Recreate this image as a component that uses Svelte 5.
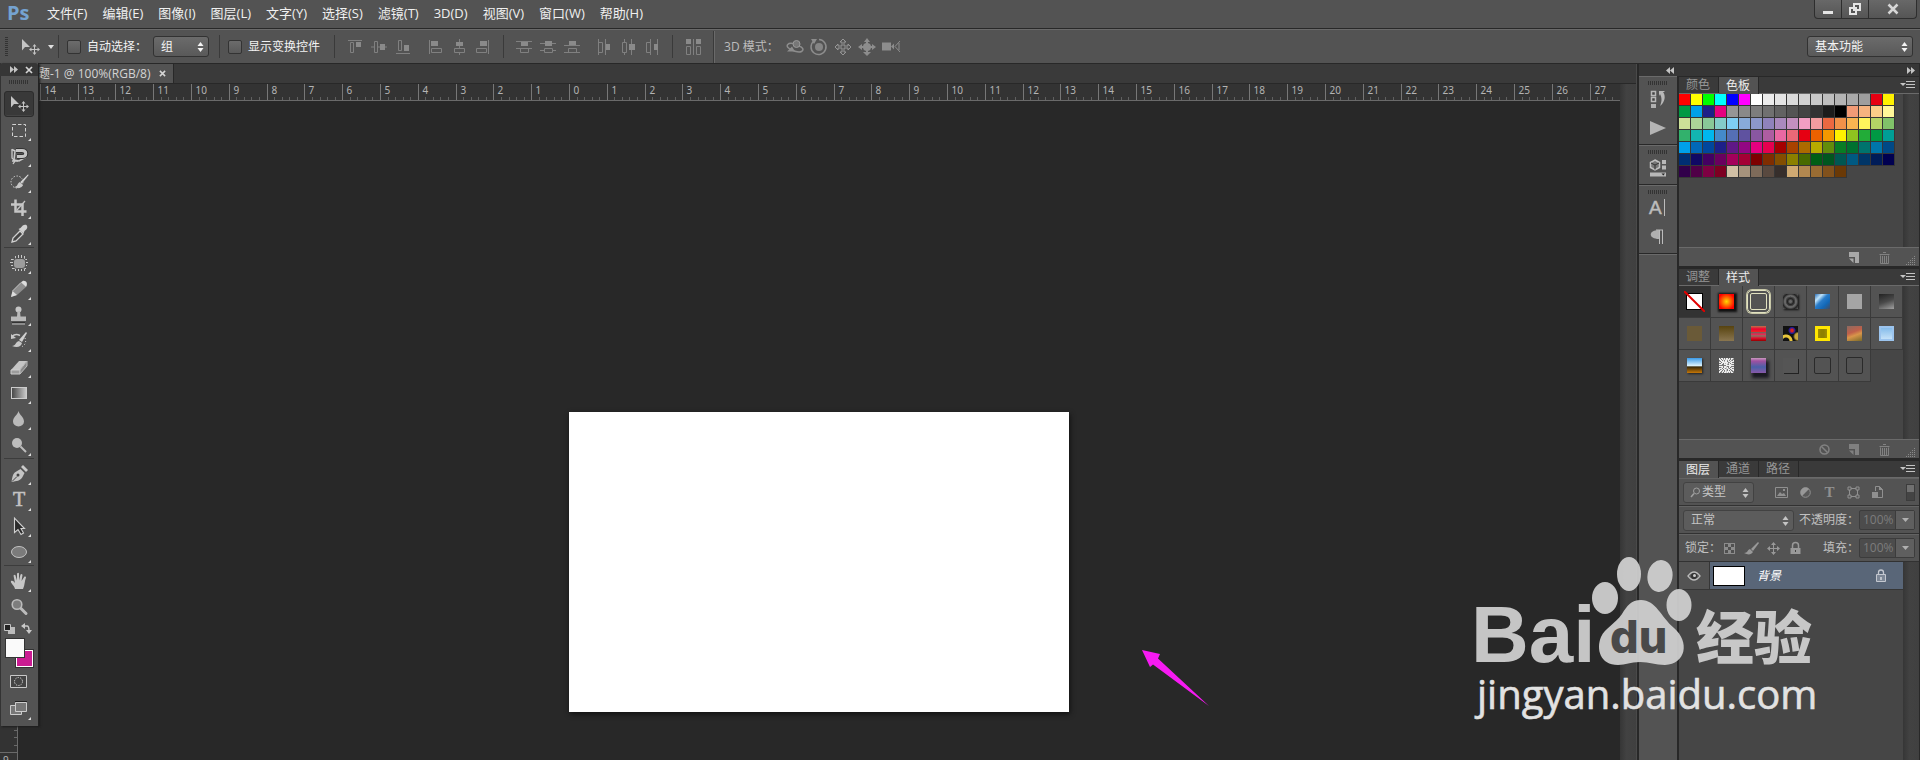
<script>
  const menus = ['文件(F)', '编辑(E)', '图像(I)', '图层(L)', '文字(Y)', '选择(S)', '滤镜(T)', '3D(D)', '视图(V)', '窗口(W)', '帮助(H)'];

  const cm = 37.8;
  const originX = 569;
  const originY = 311;
  const hTicks = [];
  for (let i = -14 * 5; i <= 27 * 5 + 3; i++) hTicks.push({ x: Math.round(originX + (i * cm) / 5) + 0.5, major: i % 5 === 0, label: Math.abs(i / 5) });
  const vTicks = [];
  for (let i = 8 * 5 + 1; i <= 9 * 5 + 1; i++) vTicks.push({ y: Math.round(originY + (i * cm) / 5) + 0.5, major: i % 5 === 0, label: Math.abs(i / 5) });

  const moveIcon =
    '<path d="M4 4v11.500l3-3.500h5z" fill="#c4c4c4"/><path d="M16.500 10v9M12 14.500h9" stroke="#c4c4c4"/><path d="M16.500 9l2 2.500h-4zM16.500 20l2-2.500h-4zM11 14.500l2.500-2v4zM22 14.500l-2.500-2v4z" fill="#c4c4c4"/>';

  const tools = [
    [
      { name: '移动工具', active: true, art: moveIcon },
      { name: '矩形选框工具', more: true, art: '<rect x="5.500" y="6.500" width="13" height="12" fill="none" stroke="#d2d2d2" stroke-dasharray="3.500 2"/>' },
      { name: '套索工具', more: true, art: '<path d="M5 5.500l3 1.500-1 9 5 1 7-4" fill="none" stroke="#c8c8c8" stroke-width="1.500"/><path d="M9 6.500h6c5 0 5 6 0 6h-5" fill="none" stroke="#333" stroke-width="5"/><path d="M9 6.500h6c5 0 5 6 0 6h-5" fill="none" stroke="#c4c4c4" stroke-width="3"/><path d="M5 5v9l3 3-2 3M5 17h6" fill="none" stroke="#c8c8c8" stroke-width="1.300"/>' },
      { name: '快速选择工具', more: true, art: '<circle cx="10" cy="12" r="6" fill="none" stroke="#d2d2d2" stroke-dasharray="1.500 1.500"/><path d="M13 12l8-8 1 1-7 9z" fill="#d0d0d0" stroke="#444" stroke-width=".5"/><path d="M13 12l3 3c-1 3-5 4-9 2 4 0 3-4 6-5z" fill="#c8c8c8"/>' },
      { name: '裁剪工具', more: true, art: '<path d="M8.500 3.500v12h11M4 8.500h11.500V20" fill="none" stroke="#c6c6c6" stroke-width="2.500"/><path d="M10 14l8-9" stroke="#c6c6c6" stroke-width="1.200"/>' },
      { name: '吸管工具', more: true, art: '<path d="M5 20l1-4 7-7 3 3-7 7z" fill="#444" stroke="#d0d0d0" stroke-width="1.300"/><path d="M11.500 7l2-1c2-3 4-4 6-3 1.500 2 1 4-2 6l-1 2.500z" fill="#d0d0d0"/>' }
    ],
    [
      { name: '修补工具', more: true, art: '<path d="M8.500 5v15M11.500 4v16M14.500 4v16M17.500 5v15M4 8.500h16M3 11.500h18M4 14.500h16M5 17.500h14" stroke="#c8c8c8"/><rect x="6" y="7" width="13" height="11" rx="4" fill="#535353"/><rect x="7" y="8" width="11" height="9" rx="3" fill="#9c9c9c"/>' },
      { name: '铅笔工具', more: true, art: '<path d="M4 20l1.500-6L14 5.500l5 4.500-9 8z" fill="#8e8e8e"/><path d="M4 20l1.500-6 4.500 4z" fill="#ddd"/><path d="M14 5.500c3-4 8 0 5 4.500z" fill="#ddd"/><path d="M5.500 14L14 5.500" stroke="#c6c6c6"/>' },
      { name: '仿制图章工具', more: true, art: '<circle cx="11.500" cy="6.500" r="3" fill="#c6c6c6"/><path d="M10.500 8h2.500l.5 5.500H19V18H4v-4.500h6z" fill="#b8b8b8"/><path d="M5 19.500h13" stroke="#333"/><path d="M5 21h13" stroke="#c6c6c6"/>' },
      { name: '历史记录画笔工具', more: true, art: '<path d="M5 7.500c3-3 6-2 8-1" fill="none" stroke="#c8c8c8" stroke-width="1.500"/><path d="M4 5v5l5-1z" fill="#c8c8c8"/><path d="M12 11l7-8 1 1-5 9z" fill="#d0d0d0"/><path d="M12 12l3 2c-1 4-5 5-10 3 4 0 3-4 7-5z" fill="#c8c8c8"/><path d="M18 9c2 5-1 8-4 9" fill="none" stroke="#d0d0d0" stroke-dasharray="1 2"/>' },
      { name: '橡皮擦工具', more: true, art: '<path d="M4 15l8-9h8l-7 9z" fill="#c5c5c5"/><path d="M4 15h9v4H4z" fill="#9c9c9c" stroke="#ccc"/><path d="M13 15l7-9v5l-7 8z" fill="#888" stroke="#bbb"/>' },
      { name: '渐变工具', more: true, art: '<defs><linearGradient id="ramp"><stop stop-color="#444"/><stop offset="1" stop-color="#ccc"/></linearGradient></defs><rect x="4.500" y="6.500" width="15" height="11" fill="url(#ramp)" stroke="#ccc"/>' },
      { name: '模糊工具', more: true, art: '<path d="M11.500 4c1 4 5.500 6 5.500 10.500a5.500 5 0 01-11 0C6 10 10.500 8 11.500 4z" fill="#bababa"/>' },
      { name: '减淡工具', more: true, art: '<circle cx="10" cy="10" r="5" fill="#bdbdbd"/><path d="M13.500 13.500l5.500 5.500" stroke="#bdbdbd" stroke-width="2"/>' }
    ],
    [
      { name: '钢笔工具', more: true, art: '<path d="M4.500 20c1-5 1-8 4-10l5-3 4 4-2 4c-2 4-6 4-11 5z" fill="#c4c4c4"/><path d="M14 5l2-2 5 5-2 2z" fill="#cacaca"/><path d="M5 19.500l5-5" stroke="#444"/><circle cx="11" cy="13" r="1.500" fill="#444"/>' },
      { name: '横排文字工具', more: true, art: '<text x="12" y="18" text-anchor="middle" font-family="Liberation Serif, serif" font-size="20" fill="#c2c2c2" stroke="#c2c2c2" stroke-width=".6">T</text>' },
      { name: '直接选择工具', more: true, art: '<path d="M7.500 4v14.500l3.500-3 3 5 2.500-1.500-2.500-4.500h3.500z" fill="#2b2b2b" stroke="#d0d0d0" stroke-width="1.100"/>' },
      { name: '椭圆工具', more: true, art: '<ellipse cx="12" cy="12" rx="7.500" ry="5.500" fill="#7b7b7b" stroke="#c2c2c2"/>' }
    ],
    [
      { name: '抓手工具', more: true, art: '<path d="M8 20c-1-4-5-6-4-8 2-1 3 1 4 2L6.500 6.500q1.500-1.500 2 0l1.500 5V4.500q1.500-1.500 2 0v7l1.500-6q1.500-1 2 .5L14.500 12l3-4.500q1.500-.5 1.500 1C17.500 12 18 16 16 20z" fill="#c6c6c6"/>' },
      { name: '缩放工具', art: '<circle cx="10" cy="9.500" r="4.800" fill="#7d7d7d" stroke="#bbb" stroke-width="1.600"/><path d="M14 13.500l5 5" stroke="#bbb" stroke-width="3" stroke-linecap="round"/>' }
    ]
  ];

  const g = 'fill="none" stroke="#808080"';
  const f = 'fill="#8a8a8a"';
  const alignGroups = [
    [
      { name: '顶对齐', art: `<path d="M5 5.500h14M7.500 7.500h3v10h-3z" ${g}/><path d="M13 7h5v5h-5z" ${f}/>` },
      { name: '垂直居中对齐', art: `<path d="M4 12h3M11 12h2M18 12h2M7.500 6.500h3v11h-3z" ${g}/><path d="M13 9h5v6h-5z" ${f}/>` },
      { name: '底对齐', art: `<path d="M5 18.500h14M7.500 5.500h3v10h-3z" ${g}/><path d="M13 10h5v6h-5z" ${f}/>` }
    ],
    [
      { name: '左对齐', art: `<path d="M6.500 5v14M8.500 13.500h10v4h-10z" ${g}/><path d="M8 6h7v5H8z" ${f}/>` },
      { name: '水平居中对齐', art: `<path d="M12.500 4v9M12.500 18v2M7.500 13.500h10v4h-10z" ${g}/><path d="M9 7h7v4H9z" ${f}/>` },
      { name: '右对齐', art: `<path d="M17.500 5v14M5.500 13.500h10v4h-10z" ${g}/><path d="M9 6h7v5H9z" ${f}/>` }
    ]
  ];
  const spreadGroups = [
    [
      { name: '按顶分布', art: `<path d="M4 6.500h16M4 13.500h16M8.500 13.500h8v4h-8z" ${g}/><path d="M9 7h7v4H9z" ${f}/>` },
      { name: '垂直居中分布', art: `<path d="M4 8.500h16M4 15.500h4M16 15.500h4M8.500 13.500h8v4h-8z" ${g}/><path d="M9 6h7v5H9z" ${f}/>` },
      { name: '按底分布', art: `<path d="M4 10.500h16M4 17.500h16M8.500 13.500h8v4h-8z" ${g}/><path d="M9 6h7v4H9z" ${f}/>` }
    ],
    [
      { name: '按左分布', art: `<path d="M6.500 4v16M13.500 4v16M6.500 7.500h4v10h-4z" ${g}/><path d="M14 9h4v6h-4z" ${f}/>` },
      { name: '水平居中分布', art: `<path d="M8.500 4v3M8.500 17v3M15.500 4v16M6.500 7.500h4v10h-4z" ${g}/><path d="M13 9h6v6h-6z" ${f}/>` },
      { name: '按右分布', art: `<path d="M10.500 4v16M17.500 4v16M6.500 7.500h4v10h-4z" ${g}/><path d="M14 9h4v6h-4z" ${f}/>` }
    ]
  ];
  const autoAlign = `<path d="M5.500 11.500h4v8h-4zM15.500 11.500h4v8h-4zM12.500 4v16" ${g}/><path d="M5 4h5v5H5zM15 4h5v5h-5z" ${f}/>`;
  const modes3d = [
    { name: '旋转3D对象', art: '<path d="M10 8.500c-5-1-7.500 2-4.500 4.500s10 5 13 3.500 1-5-3-5.500" fill="none" stroke="#8d8d8d" stroke-width="1.500"/><circle cx="13.500" cy="9" r="3.500" fill="#777" stroke="#999"/><path d="M4 16.500h8l-3-5z" fill="#8d8d8d"/>' },
    { name: '滚动3D对象', art: '<circle cx="12" cy="12" r="4" fill="#858585"/><path d="M7 6a7.500 7.500 0 1 0 5-1.500" fill="none" stroke="#8d8d8d" stroke-width="1.500"/><path d="M4 4l6 0-3 5z" fill="#8d8d8d"/>' },
    { name: '拖动3D对象', art: '<path d="M12 4l3 3h-2v4h4V9l3 3-3 3v-2h-4v4h2l-3 3-3-3h2v-4H7v2l-3-3 3-3v2h4V7H9z" fill="#555" stroke="#969696"/>' },
    { name: '滑动3D对象', art: '<path d="M12 3l3 4H9zM12 21l4-4H8zM3 12l4-3v6zM21 12l-4-3v6z" fill="#8d8d8d"/><path d="M7 12h10M12 7v11" stroke="#8d8d8d" stroke-width="2"/><circle cx="12" cy="12" r="4" fill="#8d8d8d"/>' },
    { name: '缩放3D对象', art: '<path d="M3 7.500h9v8H3z" fill="#8d8d8d"/><path d="M12 11.500l3-3v6z" fill="#8d8d8d"/><path d="M21 6l-5 5.500 5 5.500M20 8v7" fill="none" stroke="#8d8d8d"/>' }
  ];

  const swatches = [
    'f00 ff0 0f0 0ff 00f f0f fff ececec e4e4e4 dadada d1d1d1 c8c8c8 bebebe b4b4b4 a9a9a9 9e9e9e e60012 fff100',
    '009944 00a0e9 1d2088 e4007f 959595 898989 7d7d7d 707070 626262 545454 444 323232 1c1c1c 000 f29b76 f6b37f facd89 fff799',
    'cce198 acd598 89c997 84ccc9 7ecef4 88abda 8c97cb 8f82bc aa89bd c490bf f19ec2 f29c9f eb6841 f19149 f8b551 fff45c b3d465 80c269',
    '32b16c 13b5b1 00b7ee 448aca 556fb5 5f52a0 8957a1 ae5da1 ea68a2 eb6877 e60012 eb6100 f39800 fff100 8fc31f 22ac38 009944 009e96',
    '00a0e9 0068b7 00479d 1d2088 601986 920783 e4007f e5004f a40000 a84200 ac6a00 b7aa00 638c0b 097c25 007130 00736d 0075a9 004986',
    '002e73 100964 440062 6a005f a4005b a40035 7d0000 7f2d00 834e00 8a8000 486a00 005e15 00561f 005752 005982 003567 001c58 000050',
    '31004a 500047 7e0043 7d0022 d1c0a5 a6937c 7e6b5a 59493f 362e2b cfa972 b28850 996c33 81511c 6a3906'
  ].flatMap((row) => row.split(' ').map((c) => '#' + c));

  const styleCells = [
    { kind: 'none' },
    { bg: 'radial-gradient(#ffd800, #ff6a00 40%, #f00 80%)', shadow: '1px 1px 2px 2px #111' },
    { kind: 'ring' },
    { bg: 'repeating-radial-gradient(circle, #666 0 1px, #222 3px, #555 5px), #333', shadow: '1px 1px 2px #111' },
    { bg: 'linear-gradient(135deg, #2d6fb5, #bfe3fa 25%, #2a7cc8 45%, #1268b8 70%, #444c60)' },
    { bg: '#a5a5a5' },
    { bg: 'linear-gradient(160deg, #222, #4a4a4a 50%, #a0a0a0)' },
    { bg: '#6a5a38' },
    { bg: 'linear-gradient(#57430f, #8a7650)' },
    { bg: 'linear-gradient(#b9754b, #f00030 20%, #e22 38%, #70655a 42%, #f02050 55%, #857560 66%, #e01030 80%, #900)' },
    { bg: 'radial-gradient(circle at 60% 30%, #e02020 0 1px, #1c1c9a 3px, transparent 4px), radial-gradient(circle at 20% 100%, #111 3px, #e8c63c 4px 6px, transparent 7px), radial-gradient(circle at 100% 70%, #c8a63c 3px, #111 5px), linear-gradient(140deg, #111 20%, #58d0e8 35%, #111 50%, #e8c63c)' },
    { bg: 'linear-gradient(90deg, #b8a000, #8f8000 40% 60%, #b8a000)', shadow: 'inset 0 0 0 3px #ffe600' },
    { bg: 'linear-gradient(160deg, #8c6a60, #c0604a 40%, #d8954a 60%, #7a6a28)' },
    { bg: 'linear-gradient(#7ab5e8, #d0e8fa)', shadow: 'inset 0 0 0 2px #9cc4ee' },
    { bg: 'linear-gradient(#3a9ae8, #d8f0fc 50%, #3a2a08 60%, #c87808)', shadow: '1px 1px 2px #222' },
    { bg: 'repeating-conic-gradient(#eee 0 9deg, #777 12deg 17deg)' },
    { bg: 'linear-gradient(#c89ac0, #a050a0 20%, #4a60a8 60%, #8858a8)', shadow: '2px 4px 3px 1px #1a1a22' },
    { bg: '#555', shadow: '1px 1px 0 #222' },
    { kind: 'outline' },
    { kind: 'outline' }
  ];

  const filters = [
    { name: '像素图层滤镜', art: '<path d="M2.500 3.500h12v10h-12z" fill="none" stroke="#909090"/><path d="M4 12l3-4 2 2 2-1 2 3z" fill="#909090"/><path d="M10 5h2v2h-2z" fill="#909090"/>' },
    { name: '调整图层滤镜', art: '<circle cx="8.500" cy="8.500" r="4.800" fill="#5a5a5a" stroke="#909090"/><path d="M5 12L12 5a4.900 4.900 0 00-7 7z" fill="#989898"/>' },
    { name: '文字图层滤镜', art: '<text x="8.500" y="13" text-anchor="middle" font-family="Liberation Serif, serif" font-weight="bold" font-size="15" fill="#909090">T</text>' },
    { name: '形状图层滤镜', art: '<path d="M4.500 4.500h8v8h-8z" fill="none" stroke="#909090"/><path d="M3 3h3v3H3zM11 3h3v3h-3zM3 11h3v3H3zM11 11h3v3h-3z" fill="#555" stroke="#909090"/>' },
    { name: '智能对象滤镜', art: '<path d="M6.500 7V2.500h4l3 3v8H9" fill="none" stroke="#909090"/><path d="M3 8h6v6H3zM10 2l4 4h-4z" fill="#909090"/>' }
  ];
  const locks = [
    { name: '锁定透明像素', art: '<path d="M3 3h11v11H3z" fill="#8c8c8c"/><path d="M4 4h3v3H4zM10 4h3v3h-3zM7 7h3v3H7zM4 10h3v3H4zM10 10h3v3h-3z" fill="#505050"/>' },
    { name: '锁定图像像素', art: '<path d="M8 9l7-7 1 1-6 8z" fill="#999"/><path d="M7 9l3 3c-2 3-5 3-9 1 4 0 3-3 6-4z" fill="#999"/>' },
    { name: '锁定位置', art: '<path d="M8.500 3v11M3 8.500h11" stroke="#999"/><path d="M8.500 2l2.500 3H6zM8.500 15l2.500-3H6zM2 8.500L5 6v5zM15 8.500L12 6v5z" fill="#999"/>' },
    { name: '锁定全部', art: '<path d="M5.500 8V5.500a3 3 0 016 0V8" fill="none" stroke="#999" stroke-width="1.500"/><path d="M3.500 8h10v6h-10z" fill="#999"/><path d="M8 10h1v2H8z" fill="#444"/>' }
  ];

  const pageArt = '<path d="M3 3h10v11H9V8H3z" fill="#a8a8a8"/><path d="M3 9.500h4.500V14z" fill="#a8a8a8"/>';
  const trashArt = '<path d="M3.500 5.500h10M7 3.500h3M4.500 6.500v8h8v-8M6.500 7v7M8.500 7v7M10.500 7v7" fill="none" stroke="#828282"/>';
  const noneArt = '<circle cx="8.500" cy="8.500" r="4.500" fill="none" stroke="#828282" stroke-width="1.500"/><path d="M5.500 5.500l6 6" stroke="#828282" stroke-width="1.500"/>';

  let autoSelect = $state(false);
  let showTransform = $state(false);
</script>

{#snippet icon(art, size)}
  <svg width={size} height={size} viewBox="0 0 {size} {size}" aria-hidden="true">{@html art}</svg>
{/snippet}

{#snippet updown()}
  <svg class="updown" width="7" height="10" viewBox="0 0 7 10" aria-hidden="true"><path d="M3.500 0l3 4h-6zM3.500 10l3-4h-6z" fill="currentColor" /></svg>
{/snippet}

{#snippet chevrons(left)}
  <svg width="9" height="7" viewBox="0 0 9 7" aria-hidden="true">
    <path d={left ? 'M4 0v7L0 3.500zM8 0v7L4 3.500z' : 'M1 0v7l4-3.500zM5 0v7l4-3.500z'} fill="#c4c4c4" />
  </svg>
{/snippet}

{#snippet cross(size)}
  <svg width={size} height={size} viewBox="0 0 8 8" aria-hidden="true"><path d="M1 1l6 6M7 1L1 7" stroke="#d6d6d6" stroke-width="1.700" /></svg>
{/snippet}

{#snippet tabs(names, active)}
  <div class="tabs" role="tablist">
    {#each names as name, i}
      <button class="tab" class:on={i === active} role="tab" aria-selected={i === active}>{name}</button>
    {/each}
    <button class="flyout" aria-label="面板菜单">
      <svg width="15" height="9" viewBox="0 0 15 9" aria-hidden="true"><path d="M0 2h6L3 5z" fill="#c4c4c4" /><path d="M6 .5h9M6 3.500h9M6 6.500h9" stroke="#c4c4c4" /></svg>
    </button>
  </div>
{/snippet}

{#snippet resize()}
  <svg class="resize" width="10" height="10" viewBox="0 0 10 10" aria-hidden="true"><path d="M8 .5h1M6 2.500h3M4 4.500h5M2 6.500h7M0 8.500h9" stroke="#8a8a8a" stroke-dasharray="1 1" /></svg>
{/snippet}

<div class="app">
  <header class="menubar">
    <span class="logo">Ps</span>
    <nav>
      {#each menus as m}<button>{m}</button>{/each}
    </nav>
    <div class="window">
      <button aria-label="最小化"><svg width="12" height="12" viewBox="0 0 12 12"><path d="M1 8h10v3H1z" fill="#e4e4e4" /></svg></button>
      <button aria-label="还原"><svg width="12" height="12" viewBox="0 0 12 12"><path d="M5 1h6v6H5zM1 5h6v6H1z" fill="#555" stroke="#e4e4e4" stroke-width="2" /></svg></button>
      <button class="wide" aria-label="关闭">{@render cross(12)}</button>
    </div>
  </header>

  <div class="options">
    <span class="vgrip"></span>
    <button class="current" aria-label="移动工具">{@render icon(moveIcon, 24)}<svg width="6" height="4" viewBox="0 0 6 4"><path d="M0 0h6L3 4z" fill="#e0e0e0" /></svg></button>
    <span class="sep"></span>
    <label class="check"><input type="checkbox" bind:checked={autoSelect} />自动选择：</label>
    <div class="select group">
      <select aria-label="自动选择"><option>组</option><option>图层</option></select>{@render updown()}
    </div>
    <span class="sep"></span>
    <label class="check"><input type="checkbox" bind:checked={showTransform} />显示变换控件</label>
    <span class="sep far"></span>
    <div class="sets">
      {#each alignGroups as set}<div>{#each set as b}<button aria-label={b.name}>{@render icon(b.art, 24)}</button>{/each}</div>{/each}
    </div>
    <span class="sep"></span>
    <div class="sets">
      {#each spreadGroups as set}<div>{#each set as b}<button aria-label={b.name}>{@render icon(b.art, 24)}</button>{/each}</div>{/each}
    </div>
    <span class="sep"></span>
    <div class="sets"><div><button aria-label="自动对齐图层">{@render icon(autoAlign, 24)}</button></div></div>
    <span class="sep tall"></span>
    <span class="mode">3D 模式：</span>
    <div class="sets"><div>{#each modes3d as b}<button aria-label={b.name}>{@render icon(b.art, 24)}</button>{/each}</div></div>
    <div class="select workspace-pick">
      <select aria-label="工作区"><option>基本功能</option></select>{@render updown()}
    </div>
  </div>

  <div class="work">
    <main class="document">
      <div class="doctabs">
        <div class="doctab"><span>未标题-1 @ 100%(RGB/8)</span><button aria-label="关闭文档">{@render cross(7)}</button></div>
      </div>
      <div class="view">
        <div class="paper">
          <svg class="hruler" height="17" aria-hidden="true">
            {#each hTicks as t}
              <path d="M{t.x} {t.major ? 0 : 13}V17" stroke={t.major ? '#777' : '#606060'} />
              {#if t.major}<text x={t.x + 4} y="10">{t.label}</text>{/if}
            {/each}
          </svg>
          <div class="stage">
            <svg class="vruler" width="18" aria-hidden="true">
              {#each vTicks as t}
                <path d="M{t.major ? 0 : 14} {t.y}H18" stroke="#6a6a6a" />
                {#if t.major}<text x="3" y={t.y + 11}>{t.label}</text>{/if}
              {/each}
            </svg>
            <div class="artboard"></div>
            <svg class="pointer" width="68" height="58" viewBox="0 0 68 58" aria-hidden="true"><path d="M0 0l18 4-2 4.500L67 56 11 14.500 8 17z" fill="#f71af3" /></svg>
          </div>
        </div>
        <div class="track"></div>
      </div>
    </main>

    <aside class="dock">
      <div class="dockhead"><button aria-label="展开面板">{@render chevrons(true)}</button><button aria-label="折叠为图标">{@render chevrons(false)}</button></div>
      <div class="dockbody">
        <div class="strip">
          <div class="stripset">
            <span class="grip"></span>
            <button aria-label="历史记录">{@render icon('<path d="M5.500 4.500h4v4h-4zM5.500 10.500h4v4h-4z" fill="#444" stroke="#b8b8b8" stroke-width="1.500"/><path d="M5 17h5v4H5z" fill="#b0b0b0"/><path d="M13 9V4h6c-1 1-1 1-2 1 3 4 2 10-3 14 2-5 2-8 0-12z" fill="#b8b8b8"/>', 24)}</button>
            <button aria-label="动作">{@render icon('<path d="M4 5l16 7-16 7z" fill="#b4b4b4"/>', 24)}</button>
          </div>
          <div class="stripset">
            <span class="grip"></span>
            <button aria-label="属性">{@render icon('<path d="M9 4l4.500 2.500v5L9 14l-4.500-2.500v-5z" fill="#777" stroke="#c0c0c0" stroke-width="1.500"/><path d="M5 7l4 2 4-2M9 9v4.500" stroke="#333" fill="none"/><path d="M16 4h4v4h-4zM16 9.500h4v4h-4zM4 16.500h16v4H4z" fill="#b8b8b8"/><path d="M15.500 17.500h3.500l-1.700 2z" fill="#222"/>', 24)}</button>
          </div>
          <div class="stripset">
            <span class="grip"></span>
            <button aria-label="字符">{@render icon('<text x="3" y="18" font-family="Liberation Sans, sans-serif" font-size="19" fill="#bcbcbc" stroke="#bcbcbc" stroke-width=".5">A</text><path d="M18.500 3v17" stroke="#bcbcbc"/>', 24)}</button>
            <button aria-label="段落">{@render icon('<path d="M10 5h7M13.500 5v14M16.500 5v14" stroke="#bcbcbc"/><path d="M13 5v9c-11 0-11-9 0-9z" fill="#b0b0b0"/>', 24)}</button>
          </div>
          <div class="stripset rest"></div>
        </div>

        <div class="panels">
          <section>
            {@render tabs(['颜色', '色板'], 1)}
            <div class="body">
              <div class="scroll"><div class="swatches">{#each swatches as c}<button aria-label={c} style:background={c}></button>{/each}</div></div>
              <div class="track"></div>
            </div>
            <footer><button aria-label="新建色板">{@render icon(pageArt, 17)}</button><button aria-label="删除色板">{@render icon(trashArt, 17)}</button>{@render resize()}</footer>
          </section>

          <section>
            {@render tabs(['调整', '样式'], 1)}
            <div class="body">
              <div class="scroll">
                <div class="styles">
                  {#each styleCells as s, i}
                    <button class:chosen={i === 0} aria-label="样式 {i + 1}"><span class="chip {s.kind ?? ''}" style:background={s.bg} style:box-shadow={s.shadow}>
                      {#if s.kind === 'none'}<svg width="21" height="21" viewBox="0 0 21 21"><path d="M0 0l21 21" stroke="#e00000" stroke-width="2" /></svg>{/if}
                    </span></button>
                  {/each}
                </div>
              </div>
              <div class="track"></div>
            </div>
            <footer><button aria-label="清除样式">{@render icon(noneArt, 17)}</button><button aria-label="新建样式">{@render icon(pageArt.replaceAll('#a8a8a8', '#808080'), 17)}</button><button aria-label="删除样式">{@render icon(trashArt, 17)}</button>{@render resize()}</footer>
          </section>

          <section class="layers">
            {@render tabs(['图层', '通道', '路径'], 0)}
            <div class="row">
              <div class="select kind">
                <svg class="lens" width="11" height="11" viewBox="0 0 11 11" aria-hidden="true"><circle cx="6.500" cy="4" r="3" fill="none" stroke="#a0a0a0" /><path d="M4 6.500L1 10" stroke="#a0a0a0" stroke-width="1.500" /></svg>
                <select aria-label="滤镜类型"><option>类型</option></select>{@render updown()}
              </div>
              <div class="filters">{#each filters as b}<button aria-label={b.name}>{@render icon(b.art, 17)}</button>{/each}</div>
              <button class="switch" aria-label="图层过滤开关"></button>
            </div>
            <div class="row">
              <div class="select blend"><select aria-label="混合模式"><option>正常</option></select>{@render updown()}</div>
              <label class="value" for="opacity">不透明度：</label>
              <div class="percent"><input id="opacity" value="100%" /><button aria-label="调整不透明度"><svg width="7" height="4" viewBox="0 0 7 4"><path d="M0 0h7L3.500 4z" fill="#b0b0b0" /></svg></button></div>
            </div>
            <div class="row">
              <span class="value lead">锁定：</span>
              <div class="locks">{#each locks as b}<button aria-label={b.name}>{@render icon(b.art, 17)}</button>{/each}</div>
              <label class="value" for="fill">填充：</label>
              <div class="percent"><input id="fill" value="100%" /><button aria-label="调整填充"><svg width="7" height="4" viewBox="0 0 7 4"><path d="M0 0h7L3.500 4z" fill="#b0b0b0" /></svg></button></div>
            </div>
            <div class="body">
              <div class="scroll">
                <div class="layer">
                  <button class="eye" aria-label="图层可见性"><svg width="14" height="10" viewBox="0 0 14 10"><path d="M1 5q6-8 12 0-6 8-12 0z" fill="#555" stroke="#bababa" stroke-width="1.300" /><circle cx="7" cy="5" r="3" fill="#333" /><circle cx="7.500" cy="4.500" r="1.500" fill="#ccc" /></svg></button>
                  <div class="entry"><span class="thumb"></span><em>背景</em>
                    <svg width="10" height="13" viewBox="0 0 10 13" aria-hidden="true"><path d="M2.500 5V3.500a2.500 2.500 0 015 0V5" fill="none" stroke="#c4c8d0" stroke-width="1.300" /><path d="M.5 5.500h9v7h-9z" fill="#7d8796" stroke="#c4c8d0" /><path d="M5 8v3" stroke="#fff" /></svg>
                  </div>
                </div>
              </div>
              <div class="track"></div>
            </div>
          </section>
        </div>
      </div>
    </aside>

    <div class="toolbox">
      <div class="toolhead"><button aria-label="双栏">{@render chevrons(false)}</button><button aria-label="关闭工具栏">{@render cross(8)}</button></div>
      <span class="grip"></span>
      {#each tools as set}
        <div class="toolset">
          {#each set as t}
            <button class:active={t.active} aria-label={t.name}>{@render icon(t.art + (t.more ? '<path d="M24 20v3h-3z" fill="#ddd"/>' : ''), 24)}</button>
          {/each}
        </div>
      {/each}
      <div class="mini">
        <button aria-label="默认颜色"><svg width="11" height="11" viewBox="0 0 11 11"><path d="M4 4h7v7H4z" fill="#bbb" /><path d="M.5 1.500h6v6h-6z" fill="#222" stroke="#c4c4c4" /></svg></button>
        <button aria-label="切换颜色"><svg width="11" height="11" viewBox="0 0 11 11"><path d="M2 3h4q2 0 2 5" fill="none" stroke="#c8c8c8" stroke-width="1.500" /><path d="M4 0v6L0 3zM5 7h6l-3 4z" fill="#c8c8c8" /></svg></button>
      </div>
      <div class="colors"><button class="back" aria-label="背景色"></button><button class="front" aria-label="前景色"></button></div>
      <div class="toolset last">
        <button aria-label="快速蒙版">{@render icon('<path d="M3.500 6.500h16v12h-16z" fill="#444" stroke="#c8c8c8"/><circle cx="11.500" cy="12.500" r="4" fill="none" stroke="#d8d8d8" stroke-dasharray="1.300 1.200"/>', 24)}</button>
        <button aria-label="屏幕模式">{@render icon('<path d="M3.500 8.500h11v9h-11z" fill="#777" stroke="#ccc"/><path d="M8.500 5.500h11v9h-11z" fill="#777" stroke="#ccc"/><path d="M8 4.500h12" stroke="#222"/><path d="M24 20v3h-3z" fill="#ddd"/>', 24)}</button>
      </div>
    </div>
  </div>

  <svg class="watermark" width="350" height="180" viewBox="0 0 350 180" aria-label="Baidu 经验 jingyan.baidu.com">
    <g fill="#d2d2d2" fill-opacity=".92">
      <text x="1" y="112" font-family="Liberation Sans, sans-serif" font-weight="bold" font-size="80">Bai</text>
      <ellipse cx="135" cy="48" rx="13" ry="16" /><ellipse cx="159" cy="24" rx="12" ry="17" />
      <ellipse cx="190" cy="26" rx="12.500" ry="16" transform="rotate(10 190 26)" /><ellipse cx="209" cy="55" rx="12.500" ry="16" />
      <path d="M171 50c15 0 20 17 33 28 16 14 12 36-9 37-10 0-15-3-25-3s-14 3-22 3c-18 0-22-16-17-28 4-9 14-13 21-23 5-8 9-14 19-14z" />
      <text x="226" y="109" font-family="Noto Sans CJK SC, sans-serif" font-weight="900" font-size="58">经验</text>
    </g>
    <text x="140" y="103" font-family="Inter, sans-serif" font-weight="800" font-size="45" fill="#494949">du</text>
    <text x="7" y="159" font-family="Open Sans, sans-serif" font-size="40" fill="#e2e2e2" stroke="#e2e2e2" stroke-width=".6">jingyan.baidu.com</text>
  </svg>
</div>

<style>
  :global(body) { margin: 0; background: #282828; }
  * { box-sizing: border-box; }
  .app { position: relative; display: flex; flex-direction: column; height: 100vh; overflow: hidden; background: #282828; color: #e6e6e6; font: 12px/16px "Open Sans", "Noto Sans CJK SC", sans-serif; }
  button { margin: 0; padding: 0; border: 0; background: none; color: inherit; font: inherit; display: flex; align-items: center; justify-content: center; flex: none; }
  svg { display: block; flex: none; }

  .menubar { display: flex; align-items: center; flex: none; height: 29px; padding: 0 3px 0 7px; background: #535353; border-bottom: 1px solid #282828; }
  .logo { width: 40px; padding-bottom: 2px; font: bold 20px/24px "Open Sans", sans-serif; color: #75a3d1; }
  nav { display: flex; gap: 15px; flex: 1; padding-bottom: 2px; color: #f0f0f0; font-size: 13px; }
  .window { display: flex; align-self: flex-start; height: 19px; border: 1px solid #2e2e2e; border-top: 0; border-radius: 0 0 4px 4px; background: linear-gradient(#686868, #555); }
  .window button { width: 27px; border-right: 1px solid #2e2e2e; padding-bottom: 1px; }
  .window .wide { width: 47px; border-right: 0; }

  .options { display: flex; align-items: center; flex: none; height: 34px; padding-right: 7px; background: #535353; border-top: 1px solid #6a6a6a; }
  .vgrip { width: 3px; height: 20px; margin: 0 10px 0 5px; background: repeating-linear-gradient(#333 0 1px, #535353 1px 2px); }
  .current { gap: 6px; margin-right: 4px; }
  .sep { width: 1px; height: 23px; flex: none; margin: 0 8px; background: #3a3a3a; }
  .current + .sep { margin-left: 0; }
  .sep.far { margin-left: 14px; }
  .sep.tall { width: 2px; height: 32px; background: #3a3a3a; border-right: 1px solid #6a6a6a; }
  .check { display: flex; align-items: center; gap: 6px; white-space: nowrap; color: #f2f2f2; }
  .check input { appearance: none; width: 14px; height: 14px; margin: 0; border: 1px solid #333; border-radius: 2px; background: linear-gradient(#6c6c6c, #5a5a5a); }
  .select { position: relative; display: flex; flex: none; height: 21px; border: 1px solid #323232; border-radius: 3px; background: linear-gradient(#6b6b6b, #595959); color: #f4f4f4; }
  .select select { appearance: none; width: 100%; border: 0; background: none; color: inherit; font: inherit; padding: 0 16px 0 7px; }
  .updown { position: absolute; right: 4px; top: 5px; pointer-events: none; }
  .group { width: 56px; margin: 0 2px 0 6px; }
  .sets { display: flex; gap: 8px; }
  .sets > div { display: flex; }
  .mode { margin: 0 4px 0 1px; white-space: nowrap; color: #bcbcbc; }
  .workspace-pick { width: 106px; margin-left: auto; }

  .work { position: relative; display: flex; flex: 1; min-height: 0; border-top: 1px solid #282828; }
  .document { display: flex; flex-direction: column; flex: 1; min-width: 0; }
  .doctabs { display: flex; height: 20px; flex: none; background: #3a3a3a; border-bottom: 1px solid #282828; }
  .doctab { display: flex; align-items: center; gap: 9px; padding: 0 7px 0 14px; background: #535353; border-right: 1px solid #282828; color: #d4d4d4; white-space: nowrap; }
  .view { display: flex; flex: 1; min-height: 0; }
  .paper { display: flex; flex-direction: column; flex: 1; min-width: 0; }
  .hruler { width: 100%; background: #333; border-bottom: 1px solid #6a6a6a; }
  .hruler text, .vruler text { font: 10px "Noto Sans", sans-serif; fill: #b4b4b4; }
  .stage { position: relative; display: flex; flex: 1; min-height: 0; overflow: hidden; background: #282828; }
  .vruler { height: 100%; background: #333; border-right: 1px solid #6a6a6a; }
  .artboard { position: absolute; left: 569px; top: 311px; width: 500px; height: 300px; background: #fff; box-shadow: 1px 2px 5px #111; }
  .pointer { position: absolute; left: 1142px; top: 549px; }
  .track { width: 16px; flex: none; background: linear-gradient(90deg, #363636, #424242 40%, #404040); }

  .toolbox { position: absolute; left: 0; top: -1px; width: 38px; display: flex; flex-direction: column; align-items: center; background: #535353; box-shadow: inset 1px 0 0 #333, 1px 0 0 #222, 2px 1px 2px #1c1c1c; }
  .toolhead { display: flex; justify-content: space-between; align-items: center; align-self: stretch; height: 13px; padding: 0 5px 0 9px; background: #363636; border-radius: 3px 3px 0 0; }
  .grip { width: 20px; height: 4px; background: repeating-linear-gradient(90deg, #333 0 1px, #535353 1px 2px); }
  .toolbox .grip { margin: 4px 0 7px; }
  .toolset { display: flex; flex-direction: column; }
  .toolset button { width: 30px; height: 26px; }
  .toolset .active { background: #393939; border: 1px solid #2c2c2c; border-radius: 3px; box-shadow: inset 0 -1px 0 #444; }
  .toolset + .toolset { border-top: 1px solid #3c3c3c; padding-top: 2px; }
  .mini { display: flex; justify-content: space-between; align-self: stretch; padding: 2px 6px 2px 4px; height: 16px; }
  .colors { position: relative; width: 29px; height: 30px; margin: 2px 0 0; }
  .colors button { position: absolute; border: 1px solid #333; }
  .front { left: 0; top: 0; width: 20px; height: 20px; background: #fafafa; }
  .colors .back { right: 0; bottom: 0; width: 19px; height: 19px; background: #ca1c92; box-shadow: inset 0 0 0 1px #fff; }
  .last { gap: 2px; padding: 0 0 4px; }

  .dock { display: flex; flex-direction: column; width: 284px; flex: none; padding: 0 1px 0 2px; border-left: 1px solid #4a4a4a; background: #282828; }
  .dockhead { display: flex; justify-content: space-between; align-items: center; height: 12px; flex: none; padding: 0 4px 0 27px; background: #363636; }
  .dockbody { display: flex; flex: 1; gap: 2px; min-height: 0; }
  .strip { display: flex; flex-direction: column; width: 38px; flex: none; }
  .stripset { display: flex; flex-direction: column; align-items: center; padding: 4px 0; margin-bottom: 1px; background: #535353; border-top: 1px solid #6a6a6a; }
  .stripset button { width: 30px; height: 24px; }
  .stripset .grip { margin-bottom: 2px; }
  .stripset button + button { margin-top: 5px; }
  .rest { flex: 1; margin: 0; }

  .panels { display: flex; flex-direction: column; flex: 1; gap: 2px; min-width: 0; }
  section { display: flex; flex-direction: column; flex: none; background: #535353; }
  .tabs { display: flex; height: 18px; background: #3a3a3a; border-bottom: 1px solid #6a6a6a; border-top: 1px solid #282828; }
  .tab { padding: 0 8px 0 7px; color: #969696; border-right: 1px solid #282828; }
  .tab.on { background: #535353; color: #ececec; margin-bottom: -1px; }
  .flyout { margin-left: auto; padding: 0 4px; }
  section .body { display: flex; height: 153px; background: #464646; }
  .scroll { flex: 1; min-width: 0; }
  .swatches { display: grid; grid-template-columns: repeat(18, 12px); justify-content: start; }
  .swatches button { height: 12px; border: solid #363636; border-width: 0 1px 1px 0; }
  .styles { display: grid; grid-template-columns: repeat(7, 32px); grid-auto-rows: 32px; }
  .styles button { background: #535353; border: solid #3a3a3a; border-width: 0 1px 1px 0; }
  .styles .chosen { background: #333; }
  .chip { width: 15px; height: 15px; display: flex; align-items: center; justify-content: center; }
  .chip.none { width: 17px; height: 17px; background: #fff; border: 1px solid #000; }
  .chip.ring { width: 23px; height: 23px; border: 4px double #e2e2c0; border-radius: 5px; box-shadow: 0 0 0 1px #c8c8a8; }
  .chip.outline { width: 17px; height: 17px; border: 1px solid #2a2a2a; border-radius: 2px; }
  footer { display: flex; justify-content: flex-end; align-items: center; gap: 13px; height: 19px; padding: 0 3px 0 0; border-top: 1px solid #6a6a6a; }
  footer .resize { align-self: flex-end; }

  .layers { flex: 1; min-height: 0; }
  .layers .body { flex: 1; height: auto; min-height: 0; }
  .row { display: flex; align-items: center; height: 28px; flex: none; padding: 0 4px; color: #c0c0c0; border-bottom: 1px solid #323232; border-top: 1px solid #636363; }
  .row .select { color: #c4c4c4; background: #5c5c5c; border-color: #424242; }
  .kind { width: 71px; }
  .row .kind select { padding-left: 18px; padding-right: 14px; }
  .lens { position: absolute; left: 6px; top: 4px; }
  .filters { display: flex; gap: 7px; margin-left: 19px; }
  .switch { width: 9px; height: 17px; margin-left: auto; border: 1px solid #3c3c3c; background: linear-gradient(#707070 0 7px, #444 7px); }
  .blend { width: 111px; }
  .value { margin-left: auto; white-space: nowrap; }
  .value.lead { margin-left: 2px; }
  .locks { display: flex; gap: 5px; }
  .percent { display: flex; width: 56px; height: 20px; border: 1px solid #3c3c3c; border-radius: 2px; background: #4c4c4c; }
  .percent input { width: 35px; padding: 0 0 0 3px; border: 0; background: none; color: #7c7c7c; font: inherit; }
  .percent button { flex: 1; background: #5f5f5f; border-left: 1px solid #3c3c3c; }
  .layer { display: flex; height: 28px; border-bottom: 1px solid #363636; }
  .eye { width: 31px; background: #535353; border-right: 1px solid #363636; }
  .entry { display: flex; align-items: center; flex: 1; padding: 0 17px 0 3px; background: #596678; color: #fff; }
  .thumb { width: 32px; height: 20px; border: 1px solid #000; background: #fff; margin-right: 12px; }
  .entry em { flex: 1; font-style: italic; }

  .watermark { position: absolute; right: 100px; top: 550px; pointer-events: none; }
</style>
